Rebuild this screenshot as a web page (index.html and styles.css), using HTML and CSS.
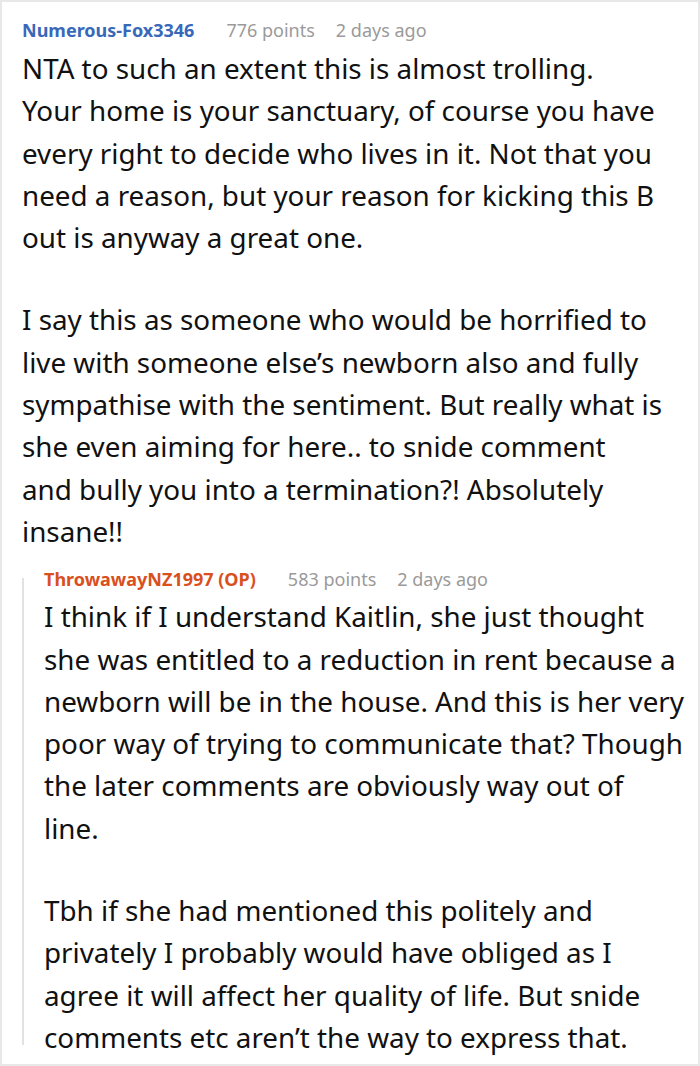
FILE: index.html
```html
<!DOCTYPE html>
<html>
<head>
<meta charset="utf-8">
<link rel="stylesheet" href="styles.css">
</head>
<body>
<div class="thread">
  <div class="comment">
    <div class="meta">
      <span class="author">Numerous-Fox3346</span>
      <span class="info">776 points</span>
      <span class="info">2 days ago</span>
    </div>
    <div class="body">
      <p>NTA to such an extent this is almost trolling.<br>Your home is your sanctuary, of course you have every right to decide who lives in it. Not that you need a reason, but your reason for kicking this B out is anyway a great one.</p>
      <p>I say this as someone who would be horrified to live with someone else’s newborn also and fully sympathise with the sentiment. But really what is she even aiming for here.. to snide comment<br>and bully you into a termination?! Absolutely insane!!</p>
    </div>
    <div class="reply">
      <div class="meta">
        <span class="author op">ThrowawayNZ1997 (OP)</span>
        <span class="info">583 points</span>
        <span class="info">2 days ago</span>
      </div>
      <div class="body">
        <p>I think if I understand Kaitlin, she just thought she was entitled to a reduction in rent because a newborn will be in the house. And this is her very poor way of trying to communicate that? Though the later comments are obviously way out of<br>line.</p>
        <p>Tbh if she had mentioned this politely and privately I probably would have obliged as I agree it will affect her quality of life. But snide comments etc aren’t the way to express that.</p>
      </div>
    </div>
  </div>
</div>
</body>
</html>
```

FILE: styles.css
```css
html, body {
  margin: 0;
  padding: 0;
  background: #ffffff;
}
body {
  width: 700px;
  height: 1066px;
  overflow: hidden;
  font-family: "Noto Sans", "Open Sans", sans-serif;
  color: #111111;
}
.thread {
  box-sizing: border-box;
  width: 700px;
  height: 1066px;
  border: 2px solid #e8e8e8;
  padding: 16px 12px 0 20px;
}
.meta {
  display: flex;
  align-items: baseline;
  font-size: 18px;
  line-height: 24px;
  height: 24px;
}
.author {
  font-weight: 700;
  color: #3868ba;
  margin-right: 32px;
}
.author.op {
  color: #d9501e;
}
.info {
  color: #9a9a9a;
  margin-right: 21px;
}
.body {
  font-size: 27.8px;
  line-height: 42.3px;
  margin-top: 5px;
}
.body p {
  margin: 0 0 40px 0;
}
.body p:last-child {
  margin-bottom: 0;
}
.reply {
  position: relative;
  margin-top: 15px;
  padding-left: 22px;
}
.reply::before {
  content: "";
  position: absolute;
  left: 0;
  top: 11px;
  bottom: 13px;
  width: 2px;
  background: #e2e2e2;
}
.reply .body {
  margin-top: 4px;
}
```
